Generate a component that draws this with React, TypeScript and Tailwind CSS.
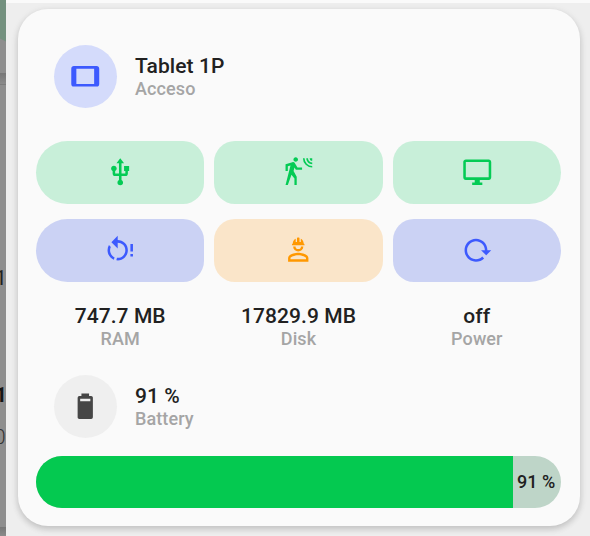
import React from "react";

const icons = {
  tablet:
    "M19,18H5V6H19M21,4H3C1.89,4 1,4.89 1,6V18A2,2 0 0,0 3,20H21A2,2 0 0,0 23,18V6C23,4.89 22.1,4 21,4Z",
  usb: "M15,7V11H16V13H13V5H15L12,1L9,5H11V13H8V10.93C8.7,10.56 9.2,9.85 9.2,9C9.2,7.78 8.21,6.8 7,6.8C5.78,6.8 4.8,7.78 4.8,9C4.8,9.85 5.3,10.56 6,10.93V13A2,2 0 0,0 8,15H11V18.05C10.29,18.41 9.8,19.15 9.8,20A2.2,2.2 0 0,0 12,22.2A2.2,2.2 0 0,0 14.2,20C14.2,19.15 13.71,18.41 13,18.05V15H16A2,2 0 0,0 18,13V11H19V7H15Z",
  motion:
    "M10,0.2C9,0.2 8.2,1 8.2,2C8.2,3 9,3.8 10,3.8C11,3.8 11.8,3 11.8,2C11.8,1 11,0.2 10,0.2M15.67,1A7.33,7.33 0 0,0 23,8.33V7A6,6 0 0,1 17,1H15.67M18.33,1C18.33,3.58 20.42,5.67 23,5.67V4.33C21.16,4.33 19.67,2.84 19.67,1H18.33M21,1A2,2 0 0,0 23,3V1H21M7.92,4.03C7.75,4.03 7.58,4.06 7.42,4.11L2,5.8V11H3.8V7.33L5.91,6.67L2,22H3.8L6.67,13.89L9,17V22H10.8V15.59L8.31,11.05L9.04,8.18L10.12,10H15V8.2H11.38L9.38,4.87C9.08,4.37 8.54,4.03 7.92,4.03Z",
  monitor:
    "M21,16H3V4H21M21,2H3C1.89,2 1,2.89 1,4V16A2,2 0 0,0 3,18H10V20H8V22H16V20H14V18H21A2,2 0 0,0 23,16V4C23,2.89 22.1,2 21,2Z",
  restart:
    "M10,4C12.05,4 14.09,4.77 15.65,6.33C18.78,9.46 18.77,14.5 15.64,17.64C13.81,19.5 11.3,20.24 8.91,19.92L9.44,17.96C11.15,18.12 12.93,17.54 14.24,16.23C16.58,13.89 16.58,10.09 14.24,7.75C13.06,6.57 11.53,6 10,6V10.58L5.04,5.63L10,.68V4M4.34,17.65C1.7,15 1.3,11 3.11,7.94L4.59,9.41C3.5,11.64 3.91,14.39 5.75,16.23C6.27,16.75 6.87,17.16 7.5,17.45L7,19.4C6,19 5.12,18.43 4.34,17.65M20,7H22V13H20V7M20,15H22V17H20V15Z",
  hardHat:
    "M12 14C9.33 14 4 15.33 4 18V21H20V18C20 15.33 14.67 14 12 14M18.1 19.1H5.9V18C5.9 17.36 9.03 15.9 12 15.9S18.1 17.36 18.1 18V19.1M8 9A4 4 0 0 0 16 9H14.1A2.1 2.1 0 0 1 9.9 9H8M11.5 2C11.2 2 11 2.21 11 2.5V5.5H10V3C10 3 7.75 3.86 7.75 6.75C7.75 6.75 7 6.89 7 8H17C16.95 6.89 16.25 6.75 16.25 6.75C16.25 3.86 14 3 14 3V5.5H13V2.5C13 2.21 12.81 2 12.5 2H11.5Z",
  reload:
    "M2 12C2 16.97 6.03 21 11 21C13.39 21 15.68 20.06 17.4 18.4L15.9 16.9C14.63 18.25 12.86 19 11 19C4.76 19 1.64 11.46 6.05 7.05C10.46 2.64 18 5.77 18 12H15L19 16H19.1L23 12H20C20 7.03 15.97 3 11 3C6.03 3 2 7.03 2 12Z",
  battery:
    "M16,8H8V6H16M16.67,4H15V2H9V4H7.33A1.33,1.33 0 0,0 6,5.33V20.67C6,21.4 6.6,22 7.33,22H16.67A1.33,1.33 0 0,0 18,20.67V5.33C18,4.6 17.4,4 16.67,4Z",
};

function Icon({ name }: { name: keyof typeof icons }) {
  return (
    <svg viewBox="0 0 24 24" className="size-[30.5px]" fill="currentColor" fillRule="evenodd">
      <path d={icons[name]} />
    </svg>
  );
}

const tiles: { icon: keyof typeof icons; style: string }[] = [
  { icon: "usb", style: "bg-[#c8efd9] text-[#04cb55] rounded-l-[31.5px] rounded-r-[21px]" },
  { icon: "motion", style: "bg-[#c8efd9] text-[#04cb55] rounded-[21px]" },
  { icon: "monitor", style: "bg-[#c8efd9] text-[#04cb55] rounded-l-[21px] rounded-r-[31.5px]" },
  { icon: "restart", style: "bg-[#cbd2f4] text-[#3d5afe] rounded-l-[31.5px] rounded-r-[21px]" },
  { icon: "hardHat", style: "bg-[#fae5c9] text-[#ff9800] rounded-[21px]" },
  { icon: "reload", style: "bg-[#cbd2f4] text-[#3d5afe] rounded-l-[21px] rounded-r-[31.5px]" },
];

const stats = [
  { value: "747.7 MB", label: "RAM" },
  { value: "17829.9 MB", label: "Disk" },
  { value: "off", label: "Power" },
];

function Label({ value, label }: { value: string; label: string }) {
  return (
    <div className="whitespace-nowrap">
      <div className="text-[21px] font-[550] leading-[24px] tracking-[0.08px] text-[#212121]">{value}</div>
      <div className="text-[18px] font-medium leading-[22px] tracking-[0.1px] text-[#a5a5a5]">{label}</div>
    </div>
  );
}

export default function App() {
  return (
    <div className="flex h-[536px] w-[590px] overflow-hidden bg-[#eeeeee] font-[Roboto,sans-serif]">
      <aside className="relative w-[6px] shrink-0 overflow-hidden bg-[#8e8e8e]">
        <div className="absolute -left-[19px] -top-[34px] size-[78px] rounded-full bg-[#74917f]" />
        <div className="absolute top-[73px] h-[12px] w-full border-b border-[#7c7c7c] bg-gradient-to-b from-[#777777] to-[#8b8b8b]" />
        <div className="absolute -left-[5px] top-[266px] text-[21px] leading-[24px] text-[#222222]">1</div>
        <div className="absolute -left-[5px] top-[383px] text-[21px] font-bold leading-[24px] text-[#161616]">1</div>
        <div className="absolute -left-[6px] top-[425px] text-[21px] font-light leading-[24px] text-[#333333]">0</div>
        <div className="absolute top-[527px] h-[9px] w-full bg-gradient-to-b from-[#777777] to-[#8b8b8b]" />
      </aside>
      <main className="flex-1">
        <div className="h-[3px] bg-[#fafafa]" />
        <section className="ml-3 mt-[6px] flex h-[517px] w-[562px] flex-col rounded-[30px] bg-[#fafafa] px-[18px] shadow-[0_3px_6px_rgba(0,0,0,0.14),0_2px_8px_rgba(0,0,0,0.08)]">
          <header className="mt-[36px] flex h-[63px] items-center gap-[18px] pl-[18px]">
            <div className="flex size-[63px] items-center justify-center rounded-full bg-[#d4dbfb] text-[#3d5afe]">
              <Icon name="tablet" />
            </div>
            <Label value="Tablet 1P" label="Acceso" />
          </header>
          <div className="mt-[33px] grid w-[525px] grid-cols-3 gap-x-[10px] gap-y-[15px]">
            {tiles.map((tile) => (
              <div key={tile.icon} className={`flex h-[63px] items-center justify-center ${tile.style}`}>
                <Icon name={tile.icon} />
              </div>
            ))}
          </div>
          <div className="mt-[22px] grid w-[525px] grid-cols-3 gap-x-[10px] text-center">
            {stats.map((s) => (
              <Label key={s.label} {...s} />
            ))}
          </div>
          <div className="mt-[25px] flex h-[63px] items-center gap-[18px] pl-[18px]">
            <div className="flex size-[63px] items-center justify-center rounded-full bg-[#efefef] text-[#464646]">
              <Icon name="battery" />
            </div>
            <Label value="91 %" label="Battery" />
          </div>
          <div className="mt-[18px] flex h-[52px] w-[525px] overflow-hidden rounded-[30px] bg-[#bed5c8]">
            <div className="w-[477px] bg-[#04c950]" />
            <div className="flex flex-1 items-center whitespace-nowrap pb-0.5 pl-1 text-[18px] font-[550] text-[#212121]">91 %</div>
          </div>
        </section>
      </main>
    </div>
  );
}
